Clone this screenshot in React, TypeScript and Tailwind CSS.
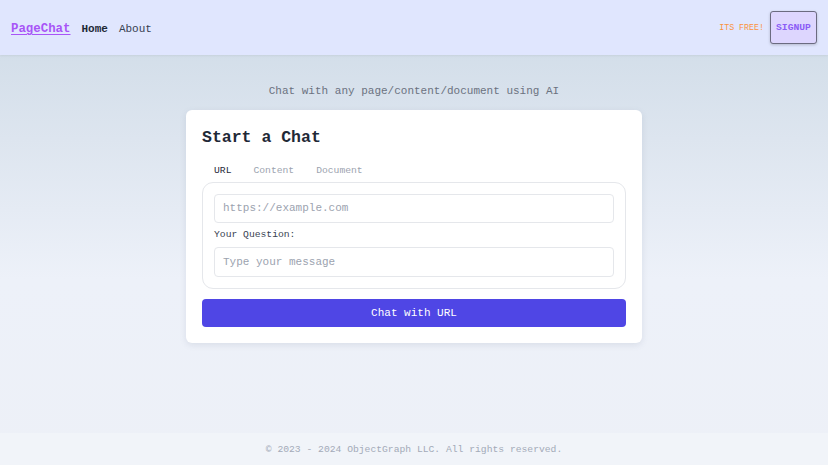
import React from "react";

export default function App() {
  const mono = { fontFamily: '"Liberation Mono", "DejaVu Sans Mono", monospace' };
  return (
    <div
      style={mono}
      className="flex h-[465px] w-full flex-col overflow-hidden bg-[linear-gradient(180deg,#cddae6_0%,#dde5ef_30%,#edf1f9_60%,#edf0f7_100%)]"
    >
      <nav className="flex h-[55px] shrink-0 items-center justify-between bg-[#e0e6fe] pl-[11px] pr-[11px] shadow-[0_1px_2px_rgba(0,0,0,0.06)]">
        <div className="mt-[3px] flex items-center gap-[11px]">
          <span className="text-[12.4px] font-bold leading-[18px] text-[#a855f7] underline underline-offset-2">PageChat</span>
          <span className="text-[11px] font-bold leading-[18px] text-[#1f2937]">Home</span>
          <span className="text-[11px] leading-[18px] text-[#374151]">About</span>
        </div>
        <div className="flex items-center gap-[6px]">
          <span className="text-[8.3px] leading-[12px] text-[#fb923c]">ITS FREE!</span>
          <button className="flex h-[33px] w-[47px] items-center justify-center rounded-[3px] border-[1.5px] border-[#6b6b80] bg-[#ddd6fe] pt-[1px] text-[9.7px] font-bold text-[#8b5cf6] shadow-[0_1px_3px_rgba(0,0,0,0.2)]">
            SIGNUP
          </button>
        </div>
      </nav>

      <main className="flex flex-1 flex-col items-center pt-[29px]">
        <p className="h-[14px] text-[11px] leading-[14px] text-[#6b7280]">Chat with any page/content/document using AI</p>
        <div className="mt-[12px] w-[456px] rounded-[6px] bg-white px-[16px] pb-[16px] pt-[17px] shadow-[0_2px_6px_rgba(100,116,139,0.15)]">
          <h1 className="h-[22px] text-[16.5px] font-bold leading-[22px] text-[#1f2937]">Start a Chat</h1>
          <div className="mt-[10px] flex h-[23px] items-start pl-[1px] pt-[5px]">
            <span className="px-[11px] text-[9.7px] leading-[14px] text-[#1f2937]">URL</span>
            <span className="px-[11px] text-[9.7px] leading-[14px] text-[#9ca3af]">Content</span>
            <span className="px-[11px] text-[9.7px] leading-[14px] text-[#9ca3af]">Document</span>
          </div>
          <div className="rounded-[11px] border border-[#e5e7eb] p-[11px]">
            <div className="flex h-[29px] items-center rounded-[4px] border border-[#e5e7eb] px-[8px] text-[11px] text-[#9ca3af]">
              https://example.com
            </div>
            <div className="mt-[6px] flex h-[13px] items-center text-[9.7px] text-[#374151]">Your Question:</div>
            <div className="mt-[5px] flex h-[30px] items-center rounded-[4px] border border-[#e5e7eb] px-[8px] text-[11px] text-[#9ca3af]">
              Type your message
            </div>
          </div>
          <button className="mt-[10px] flex h-[28px] w-full items-center justify-center rounded-[4px] bg-[#4f46e5] text-[11px] text-white">
            Chat with URL
          </button>
        </div>
      </main>

      <footer className="flex h-[32px] shrink-0 items-center justify-center bg-[#f1f4f9] pt-[2px] text-[9.7px] text-[#a3aab8]">
        © 2023 - 2024 ObjectGraph LLC. All rights reserved.
      </footer>
    </div>
  );
}
